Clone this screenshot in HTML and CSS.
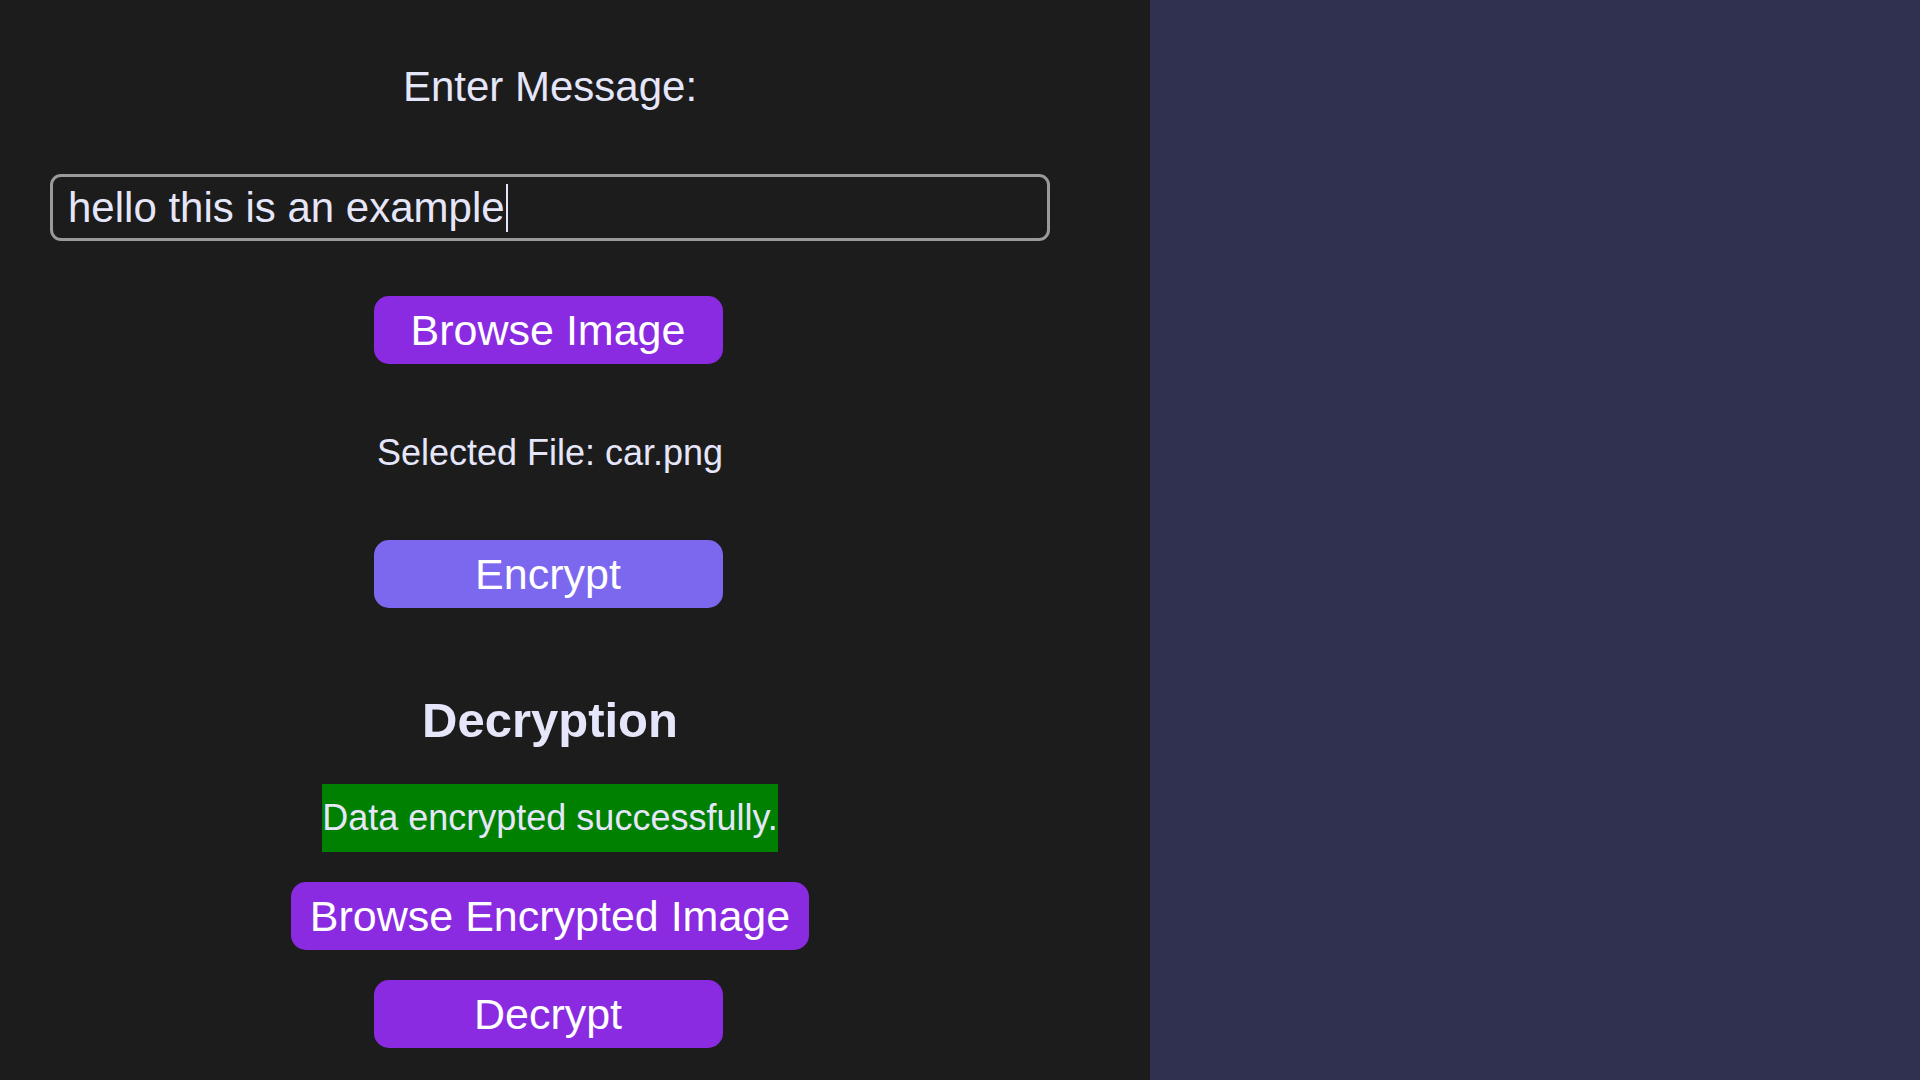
FILE: index.html
```html
<!DOCTYPE html>
<html lang="en">
<head>
<meta charset="utf-8">
<title>Steganography</title>
<link rel="stylesheet" href="styles.css">
</head>
<body>
<div class="app">
  <section class="panel">
    <label class="label" for="msg">Enter Message:</label>
    <div class="input-box" id="msg"><span class="input-text">hello this is an example</span><span class="caret"></span></div>
    <button class="btn btn-purple btn-fixed btn-browse">Browse Image</button>
    <p class="file">Selected File: car.png</p>
    <button class="btn btn-slate btn-fixed btn-encrypt">Encrypt</button>
    <h2 class="heading">Decryption</h2>
    <div class="status">Data encrypted successfully.</div>
    <button class="btn btn-purple btn-browse-enc">Browse Encrypted Image</button>
    <button class="btn btn-purple btn-fixed btn-decrypt">Decrypt</button>
  </section>
  <aside class="side"></aside>
</div>
</body>
</html>
```
FILE: styles.css
```css
html, body {
  margin: 0;
  padding: 0;
  height: 100%;
  overflow: hidden;
}
body {
  font-family: "Liberation Sans", Arial, sans-serif;
  background: #303050;
}
.app {
  display: flex;
  height: 1080px;
}
.panel {
  width: 1150px;
  box-sizing: border-box;
  padding: 62px 100px 0 50px;
  background: #1c1c1c;
  display: flex;
  flex-direction: column;
  align-items: center;
}
.side {
  flex: 1;
  background: #303050;
}
.label {
  font-size: 42px;
  line-height: 48px;
  color: #e6e6fa;
  display: block;
  margin-top: 1px;
}
.input-box {
  margin-top: 63px;
  width: 1000px;
  height: 67px;
  box-sizing: border-box;
  border: 3px solid #9a9a9a;
  border-radius: 11px;
  padding: 0 15px;
  display: flex;
  align-items: center;
  font-size: 42px;
  color: #e6e6fa;
  background: #1c1c1c;
}
.input-text {
  line-height: 48px;
  white-space: pre;
}
.caret {
  display: inline-block;
  width: 2px;
  height: 48px;
  background: #e6e6fa;
  margin-left: 1px;
}
.btn {
  font-family: "Liberation Sans", Arial, sans-serif;
  font-size: 43px;
  color: #ffffff;
  border: none;
  border-radius: 15px;
  height: 68px;
  padding: 0 19px;
  line-height: 68px;
  box-sizing: border-box;
  cursor: pointer;
}
.btn-fixed {
  width: 349px;
  margin-right: 4px;
}
.btn-purple {
  background: #8a2be2;
}
.btn-slate {
  background: #7b68ee;
}
.btn-browse {
  margin-top: 55px;
}
.file {
  margin: 68px 0 0;
  font-size: 36px;
  line-height: 41px;
  color: #e6e6fa;
}
.btn-encrypt {
  margin-top: 67px;
}
.heading {
  margin: 85px 0 0;
  font-size: 49px;
  line-height: 55px;
  font-weight: bold;
  color: #e6e6fa;
}
.status {
  margin-top: 36px;
  height: 68px;
  line-height: 68px;
  font-size: 36px;
  background: #008000;
  color: #e6e6fa;
}
.btn-browse-enc {
  margin-top: 30px;
}
.btn-decrypt {
  margin-top: 30px;
}
```
